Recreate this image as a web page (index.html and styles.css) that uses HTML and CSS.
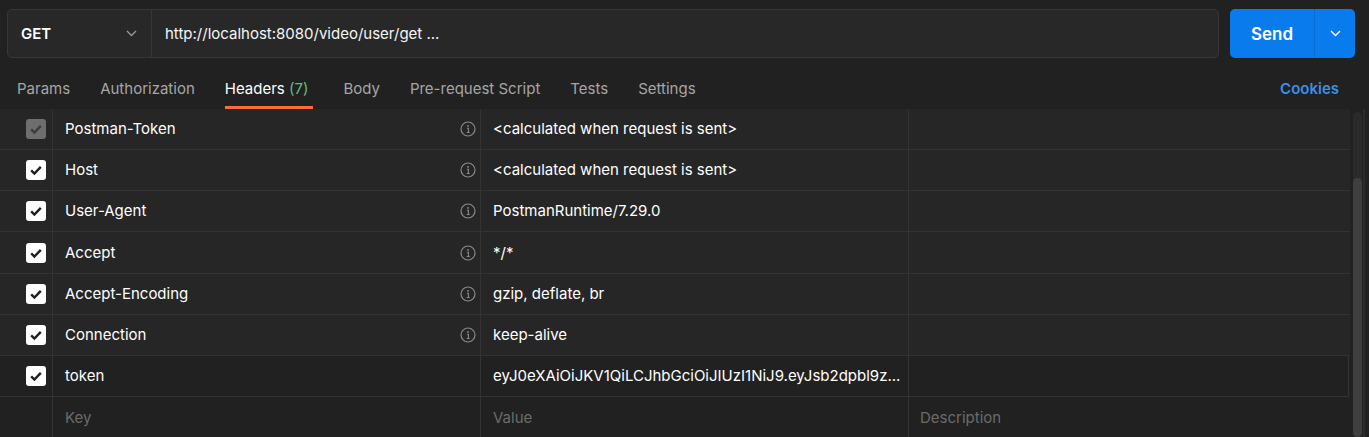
FILE: index.html
```html
<!DOCTYPE html>
<html lang="en">
<head>
<meta charset="utf-8">
<title>Postman - Headers</title>
<link rel="stylesheet" href="styles.css">
</head>
<body>
<div class="app">
  <div class="topbar">
    <div class="urlbox">
      <div class="method">
        <span class="method-name">GET</span>
        <svg class="chev" width="11" height="7" viewBox="0 0 11 7"><path d="M1 1l4.5 4.5L10 1" fill="none" stroke="#9a9a9a" stroke-width="1.3"/></svg>
      </div>
      <div class="url">http://localhost:8080/video/user/get ...</div>
    </div>
    <div class="send">
      <div class="send-label">Send</div>
      <div class="send-split">
        <svg width="11" height="7" viewBox="0 0 11 7"><path d="M1 1l4.5 4.5L10 1" fill="none" stroke="#ffffff" stroke-width="1.3"/></svg>
      </div>
    </div>
  </div>

  <div class="tabs">
    <div class="tab">Params</div>
    <div class="tab">Authorization</div>
    <div class="tab active">Headers <span class="count">(7)</span></div>
    <div class="tab">Body</div>
    <div class="tab">Pre-request Script</div>
    <div class="tab">Tests</div>
    <div class="tab">Settings</div>
    <div class="cookies">Cookies</div>
  </div>

  <div class="content">
    <div class="table">
      <div class="row readonly">
        <div class="c-check"><span class="cb cb-disabled"><svg width="20" height="20" viewBox="0 0 20 20"><path d="M5.2 10.3l3.2 3.2 6.4-6.6" fill="none" stroke="#3c3c3c" stroke-width="2.4"/></svg></span></div>
        <div class="c-key"><span>Postman-Token</span><svg class="info" width="16" height="16" viewBox="0 0 16 16"><circle cx="8" cy="8" r="7" fill="none" stroke="#8a8a8a" stroke-width="1.2"/><circle cx="8" cy="4.9" r="0.9" fill="#8a8a8a"/><path d="M6.9 7.3h1.5v4.2M6.7 11.5h3" fill="none" stroke="#8a8a8a" stroke-width="1.1"/></svg></div>
        <div class="c-val">&lt;calculated when request is sent&gt;</div>
        <div class="c-desc"></div>
      </div>
      <div class="row readonly">
        <div class="c-check"><span class="cb"><svg width="20" height="20" viewBox="0 0 20 20"><path d="M5.2 10.3l3.2 3.2 6.4-6.6" fill="none" stroke="#1e1e1e" stroke-width="2.4"/></svg></span></div>
        <div class="c-key"><span>Host</span><svg class="info" width="16" height="16" viewBox="0 0 16 16"><circle cx="8" cy="8" r="7" fill="none" stroke="#8a8a8a" stroke-width="1.2"/><circle cx="8" cy="4.9" r="0.9" fill="#8a8a8a"/><path d="M6.9 7.3h1.5v4.2M6.7 11.5h3" fill="none" stroke="#8a8a8a" stroke-width="1.1"/></svg></div>
        <div class="c-val">&lt;calculated when request is sent&gt;</div>
        <div class="c-desc"></div>
      </div>
      <div class="row readonly">
        <div class="c-check"><span class="cb"><svg width="20" height="20" viewBox="0 0 20 20"><path d="M5.2 10.3l3.2 3.2 6.4-6.6" fill="none" stroke="#1e1e1e" stroke-width="2.4"/></svg></span></div>
        <div class="c-key"><span>User-Agent</span><svg class="info" width="16" height="16" viewBox="0 0 16 16"><circle cx="8" cy="8" r="7" fill="none" stroke="#8a8a8a" stroke-width="1.2"/><circle cx="8" cy="4.9" r="0.9" fill="#8a8a8a"/><path d="M6.9 7.3h1.5v4.2M6.7 11.5h3" fill="none" stroke="#8a8a8a" stroke-width="1.1"/></svg></div>
        <div class="c-val">PostmanRuntime/7.29.0</div>
        <div class="c-desc"></div>
      </div>
      <div class="row readonly">
        <div class="c-check"><span class="cb"><svg width="20" height="20" viewBox="0 0 20 20"><path d="M5.2 10.3l3.2 3.2 6.4-6.6" fill="none" stroke="#1e1e1e" stroke-width="2.4"/></svg></span></div>
        <div class="c-key"><span>Accept</span><svg class="info" width="16" height="16" viewBox="0 0 16 16"><circle cx="8" cy="8" r="7" fill="none" stroke="#8a8a8a" stroke-width="1.2"/><circle cx="8" cy="4.9" r="0.9" fill="#8a8a8a"/><path d="M6.9 7.3h1.5v4.2M6.7 11.5h3" fill="none" stroke="#8a8a8a" stroke-width="1.1"/></svg></div>
        <div class="c-val">*/*</div>
        <div class="c-desc"></div>
      </div>
      <div class="row readonly">
        <div class="c-check"><span class="cb"><svg width="20" height="20" viewBox="0 0 20 20"><path d="M5.2 10.3l3.2 3.2 6.4-6.6" fill="none" stroke="#1e1e1e" stroke-width="2.4"/></svg></span></div>
        <div class="c-key"><span>Accept-Encoding</span><svg class="info" width="16" height="16" viewBox="0 0 16 16"><circle cx="8" cy="8" r="7" fill="none" stroke="#8a8a8a" stroke-width="1.2"/><circle cx="8" cy="4.9" r="0.9" fill="#8a8a8a"/><path d="M6.9 7.3h1.5v4.2M6.7 11.5h3" fill="none" stroke="#8a8a8a" stroke-width="1.1"/></svg></div>
        <div class="c-val">gzip, deflate, br</div>
        <div class="c-desc"></div>
      </div>
      <div class="row readonly">
        <div class="c-check"><span class="cb"><svg width="20" height="20" viewBox="0 0 20 20"><path d="M5.2 10.3l3.2 3.2 6.4-6.6" fill="none" stroke="#1e1e1e" stroke-width="2.4"/></svg></span></div>
        <div class="c-key"><span>Connection</span><svg class="info" width="16" height="16" viewBox="0 0 16 16"><circle cx="8" cy="8" r="7" fill="none" stroke="#8a8a8a" stroke-width="1.2"/><circle cx="8" cy="4.9" r="0.9" fill="#8a8a8a"/><path d="M6.9 7.3h1.5v4.2M6.7 11.5h3" fill="none" stroke="#8a8a8a" stroke-width="1.1"/></svg></div>
        <div class="c-val">keep-alive</div>
        <div class="c-desc"></div>
      </div>
      <div class="row editable">
        <div class="c-check"><span class="cb"><svg width="20" height="20" viewBox="0 0 20 20"><path d="M5.2 10.3l3.2 3.2 6.4-6.6" fill="none" stroke="#1e1e1e" stroke-width="2.4"/></svg></span></div>
        <div class="c-key"><span>token</span></div>
        <div class="c-val tight"><span class="trunc">eyJ0eXAiOiJKV1QiLCJhbGciOiJIUzI1NiJ9.eyJsb2dpbl9z...</span></div>
        <div class="c-desc"></div>
      </div>
      <div class="row placeholder">
        <div class="c-check"></div>
        <div class="c-key"><span>Key</span></div>
        <div class="c-val">Value</div>
        <div class="c-desc">Description</div>
      </div>
    </div>
    <div class="scroll">
      <div class="track"><div class="thumb"></div></div>
      <div class="edge"></div>
    </div>
  </div>
</div>
</body>
</html>
```

FILE: styles.css
```css
* { box-sizing: border-box; }

html, body {
  margin: 0;
  height: 437px;
  overflow: hidden;
}

body {
  background: #212121;
  color: #ffffff;
  font-family: Inter, "Noto Sans", "Liberation Sans", sans-serif;
  font-size: 15px;
  line-height: 18px;
}

.app {
  display: flex;
  flex-direction: column;
  height: 437px;
}

/* ---------- top bar ---------- */
.topbar {
  display: flex;
  gap: 11px;
  padding: 9px 14px 0 7px;
  height: 58px;
}

.urlbox {
  flex: 1;
  display: flex;
  height: 49px;
  background: #282828;
  border: 1px solid #373737;
  border-radius: 5px;
}

.method {
  width: 144px;
  display: flex;
  align-items: center;
  justify-content: space-between;
  padding: 0 14px 0 13px;
  border-right: 1px solid #373737;
}

.method-name {
  font-weight: 600;
  color: #ffffff;
}

.url {
  display: flex;
  align-items: center;
  padding-left: 13px;
  color: #f5f5f5;
}

.send {
  width: 125px;
  height: 49px;
  display: flex;
  background: #097bed;
  border-radius: 5px;
}

.send-label {
  width: 84px;
  display: flex;
  align-items: center;
  justify-content: center;
  font-size: 17px;
  font-weight: 600;
  color: #ffffff;
}

.send-split {
  flex: 1;
  display: flex;
  align-items: center;
  justify-content: center;
  border-left: 1px solid #0b6dd1;
}

/* ---------- tabs ---------- */
.tabs {
  display: flex;
  gap: 30px;
  height: 51px;
  padding: 0 30px 0 17px;
}

.tab {
  padding-top: 22px;
  color: #a6a6a6;
  border-bottom: 3px solid transparent;
  white-space: nowrap;
}

.tab.active {
  color: #ffffff;
  border-bottom-color: #ff6c37;
  padding-right: 5px;
}

.count {
  color: #5fbf7a;
}

.cookies {
  margin-left: auto;
  padding-top: 22px;
  color: #3d8fe6;
  font-weight: 600;
}

/* ---------- table ---------- */
.content {
  flex: 1;
  display: flex;
  min-height: 0;
}

.table {
  width: 1350px;
  display: flex;
  flex-direction: column;
}

.row {
  display: flex;
  height: 41.17px;
  flex-shrink: 0;
  border-bottom: 1px solid #333333;
}

.row.readonly {
  background: #262626;
}

.row.editable {
  width: 1349px;
  border-right: 1px solid #333333;
}

.row.placeholder {
  border-bottom: none;
  color: #6b6b6b;
}

.c-check {
  width: 53px;
  padding-left: 26px;
  display: flex;
  align-items: center;
  border-right: 1px solid #333333;
}

.c-key {
  width: 428px;
  display: flex;
  align-items: center;
  justify-content: space-between;
  padding: 0 4px 0 12px;
  border-right: 1px solid #333333;
}

.c-val {
  width: 428px;
  display: flex;
  align-items: center;
  padding: 0 8px 0 12px;
  border-right: 1px solid #333333;
  white-space: nowrap;
  overflow: hidden;
}

.c-val.tight {
  padding-right: 2px;
}

.c-desc {
  flex: 1;
  display: flex;
  align-items: center;
  padding: 0 11px;
}

.trunc {
  overflow: hidden;
  text-overflow: ellipsis;
  white-space: nowrap;
  min-width: 0;
}

.cb {
  width: 20px;
  height: 20px;
  border-radius: 3px;
  background: #ffffff;
  display: block;
}

.cb svg { display: block; }

.cb-disabled {
  background: #6e6e6e;
}

.info { flex-shrink: 0; }

/* ---------- scrollbar ---------- */
.scroll {
  flex: 1;
  display: flex;
  padding-left: 3px;
}

.track {
  width: 9px;
  margin-top: 3px;
  padding-top: 66px;
  background: #2a2a2a;
  border-radius: 5px;
  display: flex;
  flex-direction: column;
}

.thumb {
  flex: 1;
  background: #3f3f3f;
  border-radius: 5px;
}

.edge {
  width: 2px;
  margin-left: 1px;
  background: #2c2c2c;
}
```
